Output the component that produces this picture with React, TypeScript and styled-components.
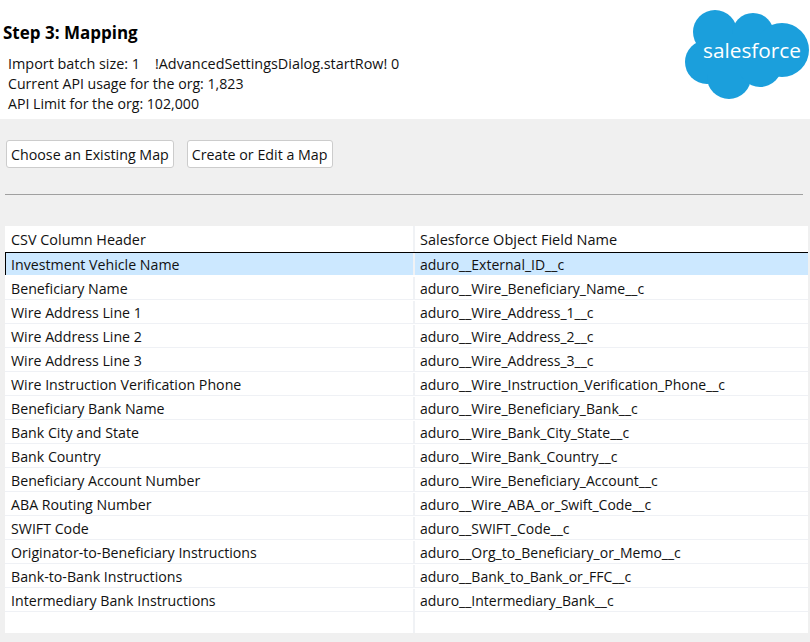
import React from "react";
import styled, { createGlobalStyle } from "styled-components";

const Global = createGlobalStyle`
  html, body { margin: 0; padding: 0; background: #f0f0f0; }
  body { font-family: "Open Sans", "Noto Sans", "Liberation Sans", sans-serif; color: #111; }
`;
const Page = styled.div`
  width: 810px; height: 642px; overflow: hidden; display: flex; flex-direction: column; background: #f0f0f0;
`;
const Header = styled.header`
  height: 119px; background: #fff; padding: 23px 0 0 3px; box-sizing: border-box; position: relative;
`;
const Title = styled.h1`
  margin: 0 0 11px; font-size: 17px; line-height: 20px; font-weight: 700; color: #000;
`;
const InfoLine = styled.div<{ $size?: number }>`
  padding-left: 5px; font-size: ${(p) => p.$size ?? 14.15}px; line-height: 20px; white-space: pre; height: 20px;
`;
const Logo = styled.svg`
  position: absolute; left: 685px; top: 10px; width: 125px; height: 90px;
`;
const LogoText = styled.text`
  font-family: "Open Sans", sans-serif; font-size: 20.8px; fill: #fff; font-weight: 400;
`;
const Toolbar = styled.div`
  display: flex; gap: 13px; padding: 21px 0 0 6px;
`;
const Button = styled.button`
  height: 28px; box-sizing: border-box; padding: 0 4px; background: #fff; border: 1px solid #ccc; border-radius: 3px;
  font: inherit; font-size: 14.25px; color: #111; white-space: nowrap;
`;
const Divider = styled.hr`
  margin: 26px 7px 0 5px; height: 1px; border: 0; background: #a0a0a0;
`;
const Table = styled.div`
  margin: 31px 2px 0 5px; height: 407px; background: #fff; display: flex; flex-direction: column;
`;
const Row = styled.div<{ $selected?: boolean; $head?: boolean }>`
  display: grid; grid-template-columns: 408px 1fr; box-sizing: border-box; flex: none;
  height: ${(p) => (p.$head ? 27 : p.$selected ? 23 : 24)}px;
  padding-top: ${(p) => (p.$head || p.$selected ? 0 : 1)}px;
  background: ${(p) => (p.$selected ? "#cce8ff" : "#fff")};
  border-bottom: ${(p) => (p.$head ? "1px solid #000" : p.$selected ? "1px solid #fff" : "1px solid #eff1f5")};
  box-shadow: ${(p) => (p.$selected ? "inset 1px 0 0 #000" : "none")};
`;
const Cell = styled.div<{ $second?: boolean; $size?: number }>`
  display: flex; align-items: center; padding-left: ${(p) => (p.$second ? 5 : 6)}px;
  font-size: ${(p) => p.$size ?? 14.2}px; white-space: nowrap;
  border-left: ${(p) => (p.$second ? "2px solid #f0f2f5" : "0")};
`;
const Filler = styled.div`
  flex: 1; display: grid; grid-template-columns: 408px 1fr;
`;
const FillerCell = styled.div`
  border-left: 2px solid #f0f2f5; grid-column: 2;
`;

const rows: [string, string][] = [
  ["Investment Vehicle Name", "aduro__External_ID__c"],
  ["Beneficiary Name", "aduro__Wire_Beneficiary_Name__c"],
  ["Wire Address Line 1", "aduro__Wire_Address_1__c"],
  ["Wire Address Line 2", "aduro__Wire_Address_2__c"],
  ["Wire Address Line 3", "aduro__Wire_Address_3__c"],
  ["Wire Instruction Verification Phone", "aduro__Wire_Instruction_Verification_Phone__c"],
  ["Beneficiary Bank Name", "aduro__Wire_Beneficiary_Bank__c"],
  ["Bank City and State", "aduro__Wire_Bank_City_State__c"],
  ["Bank Country", "aduro__Wire_Bank_Country__c"],
  ["Beneficiary Account Number", "aduro__Wire_Beneficiary_Account__c"],
  ["ABA Routing Number", "aduro__Wire_ABA_or_Swift_Code__c"],
  ["SWIFT Code", "aduro__SWIFT_Code__c"],
  ["Originator-to-Beneficiary Instructions", "aduro__Org_to_Beneficiary_or_Memo__c"],
  ["Bank-to-Bank Instructions", "aduro__Bank_to_Bank_or_FFC__c"],
  ["Intermediary Bank Instructions", "aduro__Intermediary_Bank__c"],
];

export default function App() {
  return (
    <Page>
      <Global />
      <Header>
        <Title>Step 3: Mapping</Title>
        <InfoLine $size={14.4}>{"Import batch size: 1    !AdvancedSettingsDialog.startRow! 0"}</InfoLine>
        <InfoLine>Current API usage for the org: 1,823</InfoLine>
        <InfoLine>API Limit for the org: 102,000</InfoLine>
        <Logo viewBox="0 0 125 90">
          <g fill="#1b9fdc">
            <circle cx="30" cy="22" r="22" />
            <circle cx="68" cy="24" r="21" />
            <circle cx="97" cy="40" r="27" />
            <circle cx="22" cy="52" r="22" />
            <circle cx="44" cy="67" r="22" />
            <circle cx="75" cy="55" r="22" />
            <rect x="22" y="24" width="76" height="40" />
          </g>
          <LogoText x="18" y="48">salesforce</LogoText>
        </Logo>
      </Header>
      <Toolbar>
        <Button>Choose an Existing Map</Button>
        <Button>Create or Edit a Map</Button>
      </Toolbar>
      <Divider />
      <Table>
        <Row $head>
          <Cell $size={14.4}>CSV Column Header</Cell>
          <Cell $second $size={14.5}>Salesforce Object Field Name</Cell>
        </Row>
        {rows.map(([a, b], i) => (
          <Row key={a} $selected={i === 0}>
            <Cell>{a}</Cell>
            <Cell $second $size={14}>{b}</Cell>
          </Row>
        ))}
        <Filler>
          <FillerCell />
        </Filler>
      </Table>
    </Page>
  );
}
